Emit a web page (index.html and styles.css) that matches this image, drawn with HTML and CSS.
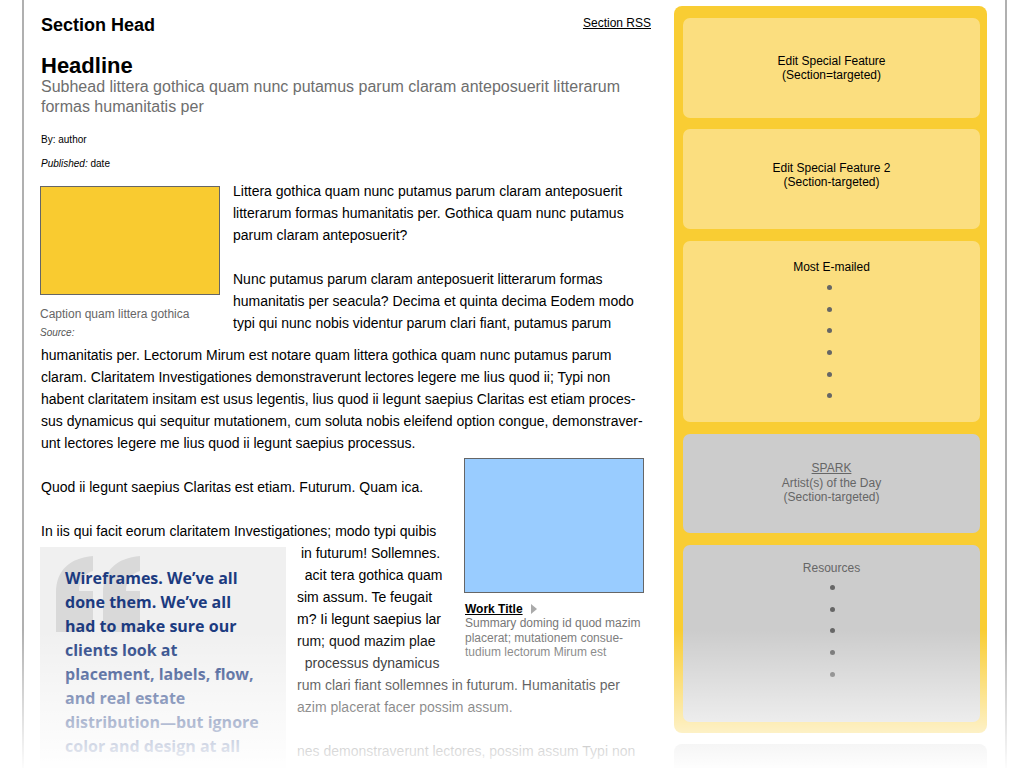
FILE: index.html
```html
<!DOCTYPE html>
<html lang="en">
<head>
<meta charset="utf-8">
<title>Section Wireframe</title>
<link rel="stylesheet" href="styles.css">
</head>
<body>
<div class="page">
  <div class="frame">
    <main class="main">
      <header class="sec-head">
        <h2 class="sec-title">Section Head</h2>
        <a class="rss">Section RSS</a>
      </header>
      <h1 class="headline">Headline</h1>
      <p class="subhead">Subhead littera gothica quam nunc putamus parum claram anteposuerit litterarum formas humanitatis per</p>
      <p class="byline">By: author</p>
      <p class="pub"><em>Published:</em> date</p>

      <div class="article">
        <div class="lead">
          <figure class="fig">
            <div class="img-yellow"></div>
            <figcaption class="caption">Caption quam littera gothica</figcaption>
            <div class="source">Source:</div>
          </figure>
          <div class="lead-text">
            <p>Littera gothica quam nunc putamus parum claram anteposuerit litterarum formas humanitatis per. Gothica quam nunc putamus parum claram anteposuerit?</p>
            <p>Nunc putamus parum claram anteposuerit litterarum formas humanitatis per seacula? Decima et quinta decima Eodem modo typi qui nunc nobis videntur parum clari fiant, putamus parum</p>
          </div>
        </div>
        <p class="cont">humanitatis per. Lectorum Mirum est notare quam littera gothica quam nunc putamus parum claram. Claritatem Investigationes demonstraverunt lectores legere me lius quod ii; Typi non habent claritatem insitam est usus legentis, lius quod ii legunt saepius Claritas est etiam proces&shy;sus dynamicus qui sequitur mutationem, cum soluta nobis eleifend option congue, demonstraver&shy;unt lectores legere me lius quod ii legunt saepius processus.</p>

        <div class="lower">
          <div class="lower-row">
            <div class="lower-left">
              <p class="para">Quod ii legunt saepius Claritas est etiam. Futurum. Quam ica.</p>
              <p class="para">In iis qui facit eorum claritatem Investigationes; modo typi quibis</p>
              <div class="clip">
                <div class="cl"> in futurum! Sollemnes.</div>
                <div class="cl">  acit tera gothica quam</div>
                <div class="cl">sim assum. Te feugait</div>
                <div class="cl">m? Ii legunt saepius lar</div>
                <div class="cl">rum; quod mazim plae</div>
                <div class="cl">  processus dynamicus</div>
              </div>
            </div>
            <figure class="work">
              <div class="img-blue"></div>
              <div class="work-title"><a>Work Title</a><span class="tri"></span></div>
              <p class="work-sum">Summary doming id quod mazim placerat; mutationem consue&shy;tudium lectorum Mirum est</p>
            </figure>
          </div>
          <div class="clip">
            <div class="cl">rum clari fiant sollemnes in futurum. Humanitatis per</div>
            <div class="cl">azim placerat facer possim assum.</div>
            <div class="cl"> </div>
            <div class="cl">nes demonstraverunt lectores, possim assum Typi non</div>
          </div>

          <aside class="pullquote">
            <svg class="qmark" width="84" height="76" viewBox="0 0 84 76" aria-hidden="true">
              <path d="M37 0 L37 15 C29 17 23 25 23 35 L37 35 L37 76 L0 76 L0 37 C0 14 14 2 37 0 Z" fill="#d9d9d9"/>
              <path d="M84 0 L84 15 C76 17 70 25 70 35 L84 35 L84 76 L47 76 L47 37 C47 14 61 2 84 0 Z" fill="#d9d9d9"/>
            </svg>
            <p class="qtext">Wireframes. We’ve all<br>done them. We’ve all<br>had to make sure our<br>clients look at<br>placement, labels, flow,<br>and real estate<br>distribution—but ignore<br>color and design at all</p>
          </aside>
        </div>
      </div>
    </main>

    <aside class="sidebar">
      <div class="sb-panel">
        <div class="box box-y box-1">Edit Special Feature<br>(Section=targeted)</div>
        <div class="box box-y box-2">Edit Special Feature 2<br>(Section-targeted)</div>
        <div class="box box-y box-3">
          <div class="box-title">Most E-mailed</div>
          <ul class="dots dots-a">
            <li></li><li></li><li></li><li></li><li></li><li></li>
          </ul>
        </div>
        <div class="box box-g box-4"><a class="spark">SPARK</a><br>Artist(s) of the Day<br>(Section-targeted)</div>
        <div class="box box-g box-5">
          <div class="box-title">Resources</div>
          <ul class="dots dots-b">
            <li></li><li></li><li></li><li></li><li></li>
          </ul>
        </div>
      </div>
      <div class="sb-next"></div>
    </aside>
  </div>
  <div class="fade"></div>
</div>
</body>
</html>
```

FILE: styles.css
```css
* { box-sizing: border-box; margin: 0; padding: 0; }
html, body { background: #fff; }
body {
  font-family: "Liberation Sans", Arial, sans-serif;
  color: #000;
}

.page {
  position: relative;
  width: 1024px;
  height: 768px;
  overflow: hidden;
}

.frame {
  margin-left: 22px;
  width: 985px;
  height: 768px;
  border-left: 2px solid #b0b0b0;
  border-right: 2px solid #b0b0b0;
  display: flex;
  padding-left: 17px;
  gap: 23px;
}

/* ---------- main column ---------- */
.main {
  width: 610px;
  padding-top: 14px;
}

.sec-head {
  display: flex;
  justify-content: space-between;
  align-items: flex-start;
}
.sec-title {
  font-size: 18px;
  font-weight: bold;
  line-height: 22px;
}
.rss {
  font-size: 12px;
  line-height: 14px;
  margin-top: 2px;
  color: #000;
  text-decoration: underline;
}

.headline {
  font-size: 22px;
  font-weight: bold;
  line-height: 24px;
  margin-top: 18px;
}
.subhead {
  font-size: 16px;
  line-height: 20px;
  color: #6e6e6e;
  margin-top: -1px;
}
.byline {
  font-size: 10px;
  line-height: 12px;
  margin-top: 17px;
}
.pub {
  font-size: 10px;
  line-height: 12px;
  margin-top: 12px;
}

.article {
  margin-top: 10px;
  padding-right: 7px;
  font-size: 14px;
  line-height: 22px;
}

.lead {
  display: flex;
  gap: 13px;
}
.fig {
  width: 180px;
  flex: none;
  margin-left: -1px;
}
.img-yellow {
  margin-top: 6px;
  height: 109px;
  background: #f9cb30;
  border: 1px solid #666;
}
.caption {
  margin-top: 12px;
  font-size: 12px;
  line-height: 14px;
  color: #666;
}
.source {
  margin-top: 6px;
  font-size: 10px;
  line-height: 12px;
  font-style: italic;
  color: #555;
}
.lead-text {
  flex: 1;
}
.lead-text p + p {
  margin-top: 22px;
}

.cont {
  margin-top: 5px;
}

/* ---------- lower section ---------- */
.lower {
  position: relative;
}
.lower-row {
  display: flex;
  justify-content: space-between;
}
.lower-left {
  width: 402px;
}
.para {
  margin-top: 22px;
}
.clip .cl {
  height: 22px;
  white-space: pre;
  overflow: hidden;
  padding-left: 256px;
}

.work {
  width: 180px;
  margin-top: 4px;
}
.img-blue {
  height: 135px;
  background: #99ccff;
  border: 1px solid #666;
}
.work-title {
  margin-top: 9px;
  font-size: 12px;
  line-height: 14px;
  font-weight: bold;
  display: flex;
  align-items: center;
}
.work-title a {
  color: #000;
  text-decoration: underline;
  margin-left: 1px;
}
.tri {
  display: inline-block;
  margin-left: 8px;
  width: 0;
  height: 0;
  border-left: 6px solid #aaa;
  border-top: 5px solid transparent;
  border-bottom: 5px solid transparent;
}
.work-sum {
  font-size: 12px;
  line-height: 14.5px;
  color: #777;
  margin-left: 1px;
}

.pullquote {
  position: absolute;
  left: -1px;
  top: 93px;
  width: 257px;
  height: 300px;
  background: #f0f0f0;
  background-clip: padding-box;
  border-right: 11px solid #fff;
  padding: 19px 0 0 25px;
}
.qmark {
  position: absolute;
  left: 16px;
  top: 9px;
}
.qtext {
  position: relative;
  font-family: "Open Sans", "Noto Sans", sans-serif;
  font-weight: 700;
  font-size: 16px;
  line-height: 24px;
  color: #1c3b80;
  white-space: nowrap;
}

/* ---------- sidebar ---------- */
.sidebar {
  width: 313px;
  flex: none;
}
.sb-panel {
  margin-top: 6px;
  background: #f9cd33;
  border-radius: 8px;
  padding: 12px 7px 11px 9px;
  display: flex;
  flex-direction: column;
  gap: 12px;
}
.box {
  border-radius: 7px;
  text-align: center;
  font-size: 12px;
  line-height: 14px;
}
.box-y { background: #fbde7f; color: #000; }
.box-g { background: #cccccc; color: #666; }

.box-1 { height: 100px; padding-top: 36px; }
.box-2 { height: 100px; padding-top: 32px; margin-top: -1px; }
.box-3 { height: 181px; padding-top: 19px; }
.box-4 { height: 99px; padding-top: 27px; line-height: 14.5px; }
.box-5 { height: 177px; padding-top: 16px; }

.spark {
  color: #666;
  text-decoration: underline;
}

.dots {
  list-style: none;
}
.dots li {
  height: 21.6px;
  display: flex;
  align-items: center;
  justify-content: center;
}
.dots li::before {
  content: "";
  width: 5px;
  height: 5px;
  border-radius: 50%;
  background: #666;
}
.dots-a { margin-top: 3px; }
.dots-a li { padding-right: 5px; }
.dots-b { margin-top: 2px; }
.dots-b li { padding-left: 1px; }

.sb-next {
  margin-top: 11px;
  height: 100px;
  border-radius: 8px;
  background: #cfcfcf;
}

/* ---------- bottom fade ---------- */
.fade {
  position: absolute;
  inset: 0;
  pointer-events: none;
  background: linear-gradient(to bottom, rgba(255,255,255,0) 630px, rgba(255,255,255,0.97) 768px);
}
```
